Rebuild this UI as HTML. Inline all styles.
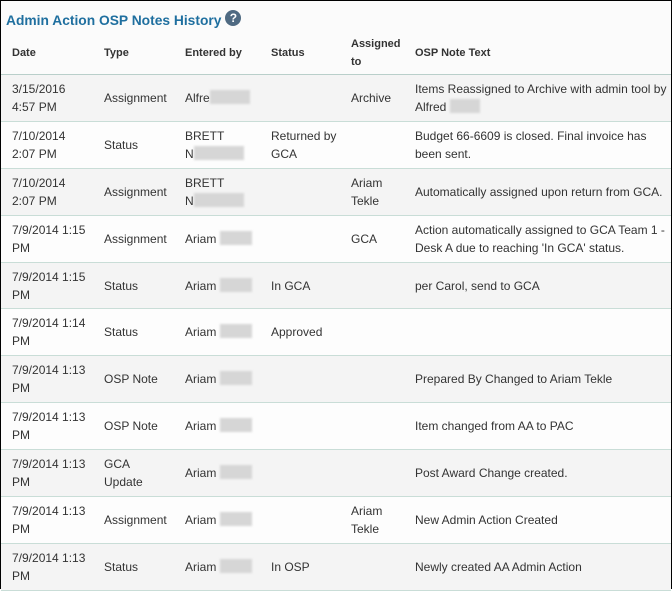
<!DOCTYPE html><html><head><style>
body{margin:0;width:672px;height:588px;overflow:hidden;background:#fff;font-family:"Liberation Sans",Arial,sans-serif;}
.f{position:absolute;left:0;top:0;width:670px;height:588px;border-left:1px solid #000;border-right:1px solid #000;border-top:1px solid #000;background:#fbfbfb;}
h1{position:absolute;left:5px;top:9px;margin:0;font-size:13.8px;font-weight:bold;color:#1f6f9f;}
.q{display:inline-block;width:16px;height:16px;border-radius:50%;background:#4f6a82;color:#fff;font-size:12px;text-align:center;line-height:16px;vertical-align:3px;margin-left:4px}
table{position:absolute;left:0px;top:30px;width:670px;border-collapse:collapse;font-size:12px;color:#333;}
td,th{padding:0 0 0 11px;vertical-align:middle;line-height:18px;text-align:left;}
th{height:43px;font-weight:bold;font-size:11px;border-bottom:1px solid #b9cfca;}
td{height:45.9px;border-bottom:1px solid #c9ddd7;}
tr:nth-child(even) td{background:#f4f4f4}
tr:nth-child(odd) td{background:#fdfdfd}
.b{display:inline-block;width:62px;height:14px;background:#d6d6d6;vertical-align:-2px;filter:blur(1px)}
.s{width:32px}
</style></head><body><div class="f">
<h1>Admin Action OSP Notes History<span class="q">?</span></h1>
<table>
<tr><th style="width:81px">Date</th><th style="width:70px">Type</th><th style="width:75px">Entered by</th><th style="width:69px">Status</th><th style="width:53px">Assigned<br>to</th><th>OSP Note Text</th></tr>
<tr><td>3/15/2016<br>4:57 PM</td><td>Assignment</td><td>Alfre<span class="b s" style="width:40px"></span></td><td></td><td>Archive</td><td>Items Reassigned to Archive with admin tool by Alfred <span class="b" style="width:30px"></span></td></tr>
<tr><td>7/10/2014<br>2:07 PM</td><td>Status</td><td>BRETT<br>N<span class="b" style="width:50px"></span></td><td>Returned by<br>GCA</td><td></td><td>Budget 66-6609 is closed. Final invoice has<br>been sent.</td></tr>
<tr><td>7/10/2014<br>2:07 PM</td><td>Assignment</td><td>BRETT<br>N<span class="b" style="width:50px"></span></td><td></td><td>Ariam<br>Tekle</td><td>Automatically assigned upon return from GCA.</td></tr>
<tr><td>7/9/2014 1:15<br>PM</td><td>Assignment</td><td>Ariam <span class="b s"></span></td><td></td><td>GCA</td><td>Action automatically assigned to GCA Team 1 -<br>Desk A due to reaching 'In GCA' status.</td></tr>
<tr><td>7/9/2014 1:15<br>PM</td><td>Status</td><td>Ariam <span class="b s"></span></td><td>In GCA</td><td></td><td>per Carol, send to GCA</td></tr>
<tr><td>7/9/2014 1:14<br>PM</td><td>Status</td><td>Ariam <span class="b s"></span></td><td>Approved</td><td></td><td></td></tr>
<tr><td>7/9/2014 1:13<br>PM</td><td>OSP Note</td><td>Ariam <span class="b s"></span></td><td></td><td></td><td>Prepared By Changed to Ariam Tekle</td></tr>
<tr><td>7/9/2014 1:13<br>PM</td><td>OSP Note</td><td>Ariam <span class="b s"></span></td><td></td><td></td><td>Item changed from AA to PAC</td></tr>
<tr><td>7/9/2014 1:13<br>PM</td><td>GCA<br>Update</td><td>Ariam <span class="b s"></span></td><td></td><td></td><td>Post Award Change created.</td></tr>
<tr><td>7/9/2014 1:13<br>PM</td><td>Assignment</td><td>Ariam <span class="b s"></span></td><td></td><td>Ariam<br>Tekle</td><td>New Admin Action Created</td></tr>
<tr><td>7/9/2014 1:13<br>PM</td><td>Status</td><td>Ariam <span class="b s"></span></td><td>In OSP</td><td></td><td>Newly created AA Admin Action</td></tr>
</table></div></body></html>
